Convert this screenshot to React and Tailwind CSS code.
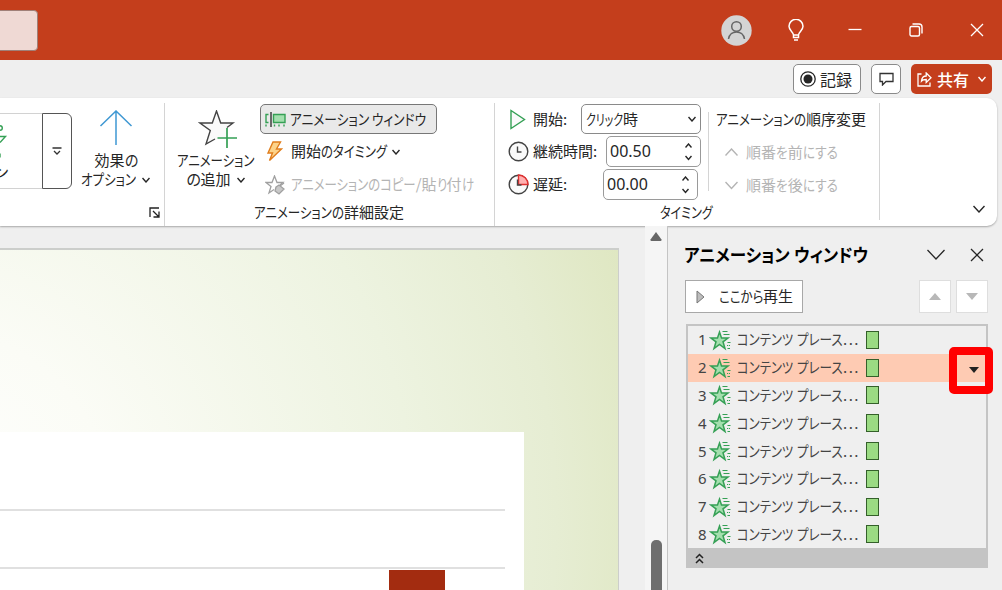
// App.jsx
import { useLayoutEffect, useRef, useState } from "react";

const steps = [1, 2, 3, 4, 5, 6, 7, 8];

// Narrow UI kana: kana runs are condensed so the whole label takes w px, kanji keep their shape
function Label({ w, text, className = "" }) {
    const ref = useRef(null);
    const [fit, setFit] = useState(null);
    const runs = text.match(/[\u3040-\u30ff]+|[^\u3040-\u30ff]+/g);
    const isKana = (run) => /[\u3040-\u30ff]/.test(run);

    useLayoutEffect(() => {
        const widths = [...ref.current.querySelectorAll("[data-run]")].map((el) => el.offsetWidth);
        let kana = 0;
        let rest = 0;
        runs.forEach((run, i) => {
            if (isKana(run)) kana += widths[i];
            else rest += widths[i];
        });
        setFit({ widths, k: kana ? (w - rest) / kana : 1 });
    }, [w, text]);

    return (
        <span ref={ref} className={`inline-flex shrink-0 whitespace-pre pb-[2px] [font-feature-settings:'palt'] ${className}`}>
            {runs.map((run, i) => {
                const k = fit && isKana(run) ? fit.k : 1;
                return (
                    <span key={i} className="inline-block" style={fit ? { width: fit.widths[i] * k } : undefined}>
                        <span data-run className="inline-block origin-left" style={{ transform: `scaleX(${k})` }}>
                            {run}
                        </span>
                    </span>
                );
            })}
        </span>
    );
}

function Chevron({ size = 8, up, className = "", strokeWidth = 1.4 }) {
    return (
        <svg
            width={size}
            height={size / 2 + 2}
            viewBox={`0 0 ${size} ${size / 2 + 2}`}
            fill="none"
            stroke="currentColor"
            strokeWidth={strokeWidth}
            className={`shrink-0 ${className}`}
        >
            <path d={up ? `M.5 ${size / 2 + 1}L${size / 2} 1l${size / 2 - 0.5} ${size / 2}` : `M.5 1l${size / 2 - 0.5} ${size / 2}L${size - 0.5} 1`} />
        </svg>
    );
}

function CloseIcon({ size = 14 }) {
    return (
        <svg width={size} height={size} viewBox="0 0 14 14" fill="none" stroke="currentColor" strokeWidth="1.3">
            <path d="M1 1l12 12M13 1L1 13" />
        </svg>
    );
}

function EffectStar() {
    return (
        <svg width="22" height="22" viewBox="0 0 22 22" fill="none" className="shrink-0">
            <path
                d="M10.500 3l2 6H19l-5 3.800 2 6.700-5.500-4-5.500 4 2-6.700L2 9h6.500z"
                fill="#a3dfae"
                stroke="#35a055"
                strokeWidth="1.500"
            />
            <path d="M13.500 2.500h5M14.500 5.500h6M18.500 13.500h3M18 16.500h1.200M20 16.500h1M18.500 19.500h2.500" stroke="#35a055" strokeWidth="1.200" />
        </svg>
    );
}

function TitleBar() {
    return (
        <header className="flex h-[60px] items-center bg-[#c43e1c] text-white">
            <div className="-ml-1 h-[41px] w-[42px] rounded border border-[#a08078] bg-[#efd9d4]" />
            <div className="ml-auto flex items-center pr-[18px]">
                <svg width="31" height="31" viewBox="0 0 31 31" fill="none" stroke="#666" strokeWidth="1.500">
                    <circle cx="15.500" cy="15.500" r="15.200" fill="#d4d4d4" stroke="none" />
                    <circle cx="15.500" cy="11.500" r="4.800" />
                    <path d="M7.500 24c1.500-9.500 14.500-9.500 16 0" />
                </svg>
                <svg width="16" height="22" viewBox="0 0 16 22" fill="none" stroke="#fff" strokeWidth="1.500" className="ml-[36px]">
                    <path d="M5.500 16c0-3-4.500-4.500-4.500-8.700a7 7 0 0 1 14 0C15 11.500 10.500 13 10.500 16zM5.500 16v2.500h5V16M6 21h4" />
                </svg>
                <svg width="14" height="14" viewBox="0 0 14 14" stroke="#fff" strokeWidth="1.300" className="ml-[44px]">
                    <path d="M.5 6.500h13" />
                </svg>
                <svg width="14" height="14" viewBox="0 0 14 14" fill="none" stroke="#fff" strokeWidth="1.400" className="ml-[47px]">
                    <rect x="1" y="3.500" width="9.500" height="9.500" rx="1.500" />
                    <path d="M3.500 1h6.500q3 0 3 3v6.500" />
                </svg>
                <span className="ml-[47px]">
                    <CloseIcon />
                </span>
            </div>
        </header>
    );
}

function ActionBar() {
    return (
        <div className="flex h-[38px] items-center justify-end pr-[10px] text-base">
            <button className="flex h-[30px] w-[68px] items-center justify-center gap-[4px] rounded-[5px] border border-[#8a8a8a] bg-white pr-[2px]">
                <svg width="16" height="16" viewBox="0 0 16 16" fill="none" stroke="#262626" strokeWidth="1.300">
                    <circle cx="8" cy="8" r="7.200" />
                    <circle cx="8" cy="8" r="4.500" fill="#262626" stroke="none" />
                </svg>
                <span className="pb-px">記録</span>
            </button>
            <button className="ml-[10px] flex h-[30px] w-[30px] items-center justify-center rounded-[5px] border border-[#8a8a8a] bg-white">
                <svg width="15" height="14" viewBox="0 0 15 14" fill="none" stroke="#333" strokeWidth="1.300">
                    <path d="M1 1.500h13v8H7l-3.500 3.500V9.500H1z" />
                </svg>
            </button>
            <button className="ml-[10px] flex h-[30px] w-[81px] items-center rounded-[5px] bg-[#c43e1c] pl-[6px] font-medium text-white">
                <svg width="15" height="15" viewBox="0 0 15 15" fill="none" stroke="#fff" strokeWidth="1.300">
                    <path d="M4.500 2H1v12h12v-3.500M4.500 9c.3-3.500 2-5 4.700-5V1L14 5.800l-4.800 4.700v-3C7 7.500 5.500 7.800 4.500 9z" />
                </svg>
                <span className="ml-[5px] pb-px">共有</span>
                <Chevron className="ml-[9px]" />
            </button>
        </div>
    );
}

function EffectGroup() {
    return (
        <section className="flex w-[164px] flex-col">
            <div className="flex h-[99px]">
                <div className="mt-[10px] flex h-[76px]">
                    <div className="flex w-[42px] flex-col overflow-hidden border-y border-[#d2d2d2]">
                        <svg width="8" height="44" viewBox="0 0 8 44" fill="none" stroke="#35a055" strokeWidth="1.400" className="shrink-0">
                            <circle cx="0" cy="14" r="2.300" />
                            <path d="M0 22.500h5.500L0 28.500M0 39.500v4" />
                        </svg>
                        <span className="-ml-[6px] text-[15px] leading-[28px]">ン</span>
                    </div>
                    <button className="flex w-[30px] flex-col items-center justify-center rounded-r-[6px] border border-[#555]">
                        <svg width="10" height="8" viewBox="0 0 10 8" fill="none" stroke="#333" strokeWidth="1.300">
                            <path d="M.5 1h9M2 4l3 3 3-3" />
                        </svg>
                    </button>
                </div>
                <button className="flex w-[88px] flex-col items-center pt-[7px]">
                    <svg width="34" height="36" viewBox="0 0 34 36" fill="none" stroke="#3f98d3" strokeWidth="1.500">
                        <path d="M17 35V1M1.500 16L17 1l15.500 15" />
                    </svg>
                    <Label w={43} text="効果の" className="mt-[4px] h-[20px] leading-[20px]" />
                    <span className="mr-[2px] flex h-[19px] items-center gap-[6px]">
                        <Label w={55} text="オプション" />
                        <Chevron />
                    </span>
                </button>
            </div>
            <div className="flex h-[21px] items-center justify-end pr-[4px]">
                <svg width="11" height="11" viewBox="0 0 11 11" fill="none" stroke="#222" strokeWidth="1.300">
                    <path d="M1 10V1h9M4 4l5.500 5.500M10 4.500V10H4.500" />
                </svg>
            </div>
        </section>
    );
}

function AdvancedGroup() {
    return (
        <section className="flex w-[330px] flex-col border-l border-[#d4d4d4]">
            <div className="flex h-[99px]">
                <button className="flex w-[95px] flex-col items-center pl-[6px] pt-[7px]">
                    <svg width="40" height="38" viewBox="0 0 40 38" fill="none" stroke="#444" strokeWidth="1.400" className="ml-[4px]">
                        <path d="M18 29l-10 5 4.300-13.500L2 13h12.300L18.500 1l4.200 12H35l-6 5v10z" fill="#fafafa" stroke="none" />
                        <path d="M17 29l-9 5 4.300-13.500L2 13h12.300L18.500 1l4.200 12H35l-6 4.500" />
                        <path d="M29 18v20M19.500 28h19.500" stroke="#35a055" strokeWidth="1.700" />
                    </svg>
                    <Label w={77} text="アニメーション" className="mt-[2px] h-[20px] leading-[20px]" />
                    <span className="flex h-[19px] items-center gap-[6px]">
                        <Label w={44} text="の追加" />
                        <Chevron />
                    </span>
                </button>
                <div className="flex flex-col">
                    <div className="flex h-[32px] items-center">
                        <button className="flex h-[30px] w-[177px] items-center rounded-[5px] border border-[#777] bg-[#e9e9e9] pl-[4px]">
                            <svg width="21" height="15" viewBox="0 0 21 15" fill="none" stroke="#35a055" strokeWidth="1.400">
                                <path d="M3.500 2.500H1v8h2.500" />
                                <path d="M8.500 2.500H20v8H8.500z" fill="#a3dfae" />
                                <path d="M1 12.500v2M9.500 12.500v2M14 12.500v2M19 12.500v2" />
                                <path d="M6 0v15" stroke="#333" />
                            </svg>
                            <Label w={136} text="アニメーション ウィンドウ" className="ml-[4px]" />
                        </button>
                    </div>
                    <div className="flex h-[33px] items-center pl-[6px]">
                        <svg width="17" height="21" viewBox="0 0 17 21" fill="#fcd38a" stroke="#e07d1c" strokeWidth="1.400">
                            <path d="M7 1h7.500l-4 7h5L3.500 19.500 6.500 12H2z" />
                        </svg>
                        <Label w={96} text="開始のタイミング" className="ml-[8px]" />
                        <Chevron className="ml-[5px]" />
                    </div>
                    <div className="flex h-[33px] items-center pl-[5px] text-[#b4b4b4]">
                        <svg width="21" height="20" viewBox="0 0 21 20" fill="none" stroke="#a0a0a0" strokeWidth="1.300">
                            <path d="M9 14.500L4 18l2-6.500L1 7.500h6L9.500 1 12 7.500h6l-3 2.500" />
                            <path d="M11 12l3-2 5 4-5 5-4-3zM15 11l4-3" fill="#c8c8c8" />
                        </svg>
                        <Label w={183} text="アニメーションのコピー/貼り付け" className="ml-[5px]" />
                    </div>
                </div>
            </div>
            <div className="flex h-[21px] items-center justify-center pr-[1px]">
                <Label w={150} text="アニメーションの詳細設定" />
            </div>
        </section>
    );
}

function Spinner({ value }) {
    return (
        <div className="flex h-[31px] w-[95px] items-center justify-between rounded-[5px] border border-[#9a9a9a] bg-white pl-[3px] pr-[8px]">
            <span className="pb-[2px] font-['Noto_Sans',sans-serif] text-base">{value}</span>
            <span className="flex flex-col gap-[7px]">
                <Chevron up size={7} />
                <Chevron size={7} />
            </span>
        </div>
    );
}

function ClockIcon({ delayed }) {
    return (
        <svg width="21" height="21" viewBox="0 0 21 21" fill="none" stroke="#444" strokeWidth="1.400" className="shrink-0">
            <circle cx="10.500" cy="10.500" r="9.300" fill="#fafafa" />
            {delayed && <path d="M10.500 1v9.500H20A9.500 9.500 0 0 0 10.500 1z" fill="#ffb0b0" stroke="#e03030" />}
            <path d="M9.500 5.500V11h4" />
        </svg>
    );
}

function TimingGroup() {
    return (
        <section className="flex w-[385px] flex-col border-l border-[#d4d4d4]">
            <div className="flex h-[99px]">
                <div className="flex w-[213px] flex-col pl-[13px]">
                    <div className="flex h-[32px] items-center">
                        <svg width="18" height="21" viewBox="0 0 18 21" fill="#fafafa" stroke="#35a055" strokeWidth="1.400">
                            <path d="M3 1.500v18l13.500-9z" />
                        </svg>
                        <span className="ml-[7px] w-[48px] pb-[2px]">開始:</span>
                        <div className="flex h-[30px] w-[120px] items-center justify-between rounded-[5px] border border-[#8a8a8a] pl-[4px] pr-[4px]">
                            <Label w={52} text="クリック時" />
                            <Chevron />
                        </div>
                    </div>
                    <div className="flex h-[33px] items-center">
                        <ClockIcon />
                        <span className="ml-[4px] w-[73px] whitespace-nowrap pb-[2px]">継続時間:</span>
                        <Spinner value="00.50" />
                    </div>
                    <div className="flex h-[33px] items-center">
                        <ClockIcon delayed />
                        <span className="ml-[4px] w-[70px] pb-[2px]">遅延:</span>
                        <Spinner value="00.00" />
                    </div>
                </div>
                <div className="mt-[9px] h-[79px] border-l border-[#d4d4d4]" />
                <div className="flex flex-col pl-[7px]">
                    <div className="flex h-[33px] items-center">
                        <Label w={150} text="アニメーションの順序変更" />
                    </div>
                    <div className="flex h-[33px] items-center pl-[9px] text-[#b4b4b4]">
                        <Chevron up size={13} />
                        <Label w={92} text="順番を前にする" className="ml-[8px]" />
                    </div>
                    <div className="flex h-[33px] items-center pl-[9px] text-[#b4b4b4]">
                        <Chevron size={13} />
                        <Label w={92} text="順番を後にする" className="ml-[8px]" />
                    </div>
                </div>
            </div>
            <div className="flex h-[21px] items-center justify-center pr-[2px]">
                <Label w={53} text="タイミング" />
            </div>
        </section>
    );
}

function Ribbon() {
    return (
        <div className="mr-[5px] flex h-[128px] shrink-0 rounded-r-[10px] bg-white pt-[5px] text-[15px] shadow-[0_1px_2px_rgba(0,0,0,0.3)]">
            <EffectGroup />
            <AdvancedGroup />
            <TimingGroup />
            <div className="flex h-[117px] flex-1 items-end justify-end border-l border-[#d4d4d4] pb-[7px] pr-[12px]">
                <Chevron size={12} />
            </div>
        </div>
    );
}

function SlideArea() {
    return (
        <main className="flex w-[645px] flex-col pt-[22px]">
            <div className="flex w-[619px] flex-1 flex-col border-t-2 border-r border-[#cccecb] bg-[radial-gradient(circle_at_-80px_270px,#ffffff_0%,#fbfcf6_26%,#edf3e0_66%,#e6edd3_85%,#dfe7c2_100%)] pt-[182px]">
                <div className="flex w-[524px] flex-1 flex-col bg-white pt-[77px]">
                    <div className="h-[58px] w-[505px] border-t-2 border-[#e0e0e0]" />
                    <div className="w-[505px] border-t-2 border-[#e0e0e0]" />
                    <div className="mt-px ml-[389px] w-[56px] flex-1 bg-[#a32c10]" />
                </div>
            </div>
        </main>
    );
}

function ScrollBar() {
    return (
        <div className="flex w-[23px] flex-col items-center border-r border-[#c4c4c4] bg-[#f5f5f5] pt-[6px]">
            <svg width="12" height="9" viewBox="0 0 12 9" fill="#666">
                <path d="M6 0l5.500 7.500q.3 1.500-1 1.500h-9q-1.300 0-1-1.500z" />
            </svg>
            <div className="mt-[299px] w-[11px] flex-1 rounded-t-[5px] bg-[#6e6e6e]" />
        </div>
    );
}

function AnimationPane() {
    return (
        <aside className="flex flex-1 flex-col pl-[17px] pr-[14px] text-[15px]">
            <div className="flex h-[54px] items-center pr-[4px] pt-[3px]">
                <Label w={184} text="アニメーション ウィンドウ" className="-ml-px text-[18px] font-bold text-black" />
                <Chevron size={18} strokeWidth={1.3} className="ml-auto mr-[25px]" />
                <CloseIcon />
            </div>
            <div className="flex h-[33px] gap-[5px]">
                <button className="mr-auto flex w-[118px] items-center border border-[#a8a8a8] bg-white pl-[10px]">
                    <svg width="9" height="14" viewBox="0 0 9 14" fill="#bdbdbd" stroke="#777">
                        <path d="M1 1v12l7-6z" />
                    </svg>
                    <Label w={74} text="ここから再生" className="ml-[14px] mb-px" />
                </button>
                <button className="flex w-[32px] items-center justify-center border border-[#dedede] bg-white">
                    <svg width="12" height="7" viewBox="0 0 12 7" fill="#b8b8b8">
                        <path d="M6 0l6 7H0z" />
                    </svg>
                </button>
                <button className="flex w-[32px] items-center justify-center border border-[#dedede] bg-white">
                    <svg width="12" height="7" viewBox="0 0 12 7" fill="#b8b8b8">
                        <path d="M0 0h12L6 7z" />
                    </svg>
                </button>
            </div>
            <div className="mt-[11px] ml-px border-2 border-b-0 border-[#c4c4c4] text-[#444]">
                {steps.map((n) => (
                    <div
                        key={n}
                        className={`relative flex h-[27.8px] items-center pl-[10px] ${n === 2 ? "bg-[#fecbb3]" : ""}`}
                    >
                        <span className="w-[11px] font-['Noto_Sans',sans-serif]">{n}</span>
                        <EffectStar />
                        <Label w={56} text="コンテンツ" className="ml-[6px]" />
                        <Label w={49} text=" プレース" className="ml-[1px]" />
                        <span className="w-[19px] pb-[2px] tracking-[1.5px]">...</span>
                        <span className="ml-[4px] h-[18px] w-[13px] border border-[#34602a] bg-[#9bdb83]" />
                        {n === 2 && (
                            <div className="absolute -top-[7px] -right-[7px] z-10 flex h-[47px] w-[44px] items-center justify-center rounded-[5px] border-8 border-[#ff0000] pl-[5px]">
                                <svg width="10" height="6" viewBox="0 0 10 6" fill="#222">
                                    <path d="M0 0h10L5 6z" />
                                </svg>
                            </div>
                        )}
                    </div>
                ))}
                <div className="-mx-[2px] flex h-[20px] items-center bg-[#c4c4c4] pl-[9px]">
                    <svg width="9" height="11" viewBox="0 0 9 11" fill="none" stroke="#222" strokeWidth="1.500">
                        <path d="M1 5l3.500-3.500L8 5M1 10l3.500-3.500L8 10" />
                    </svg>
                </div>
            </div>
        </aside>
    );
}

export default function App() {
    return (
        <div className="flex h-[590px] w-[1002px] flex-col overflow-hidden bg-[#efefef] font-['Noto_Sans_CJK_JP',sans-serif] leading-none text-[#262626]">
            <TitleBar />
            <ActionBar />
            <Ribbon />
            <div className="flex min-h-0 flex-1">
                <SlideArea />
                <ScrollBar />
                <AnimationPane />
            </div>
        </div>
    );
}
